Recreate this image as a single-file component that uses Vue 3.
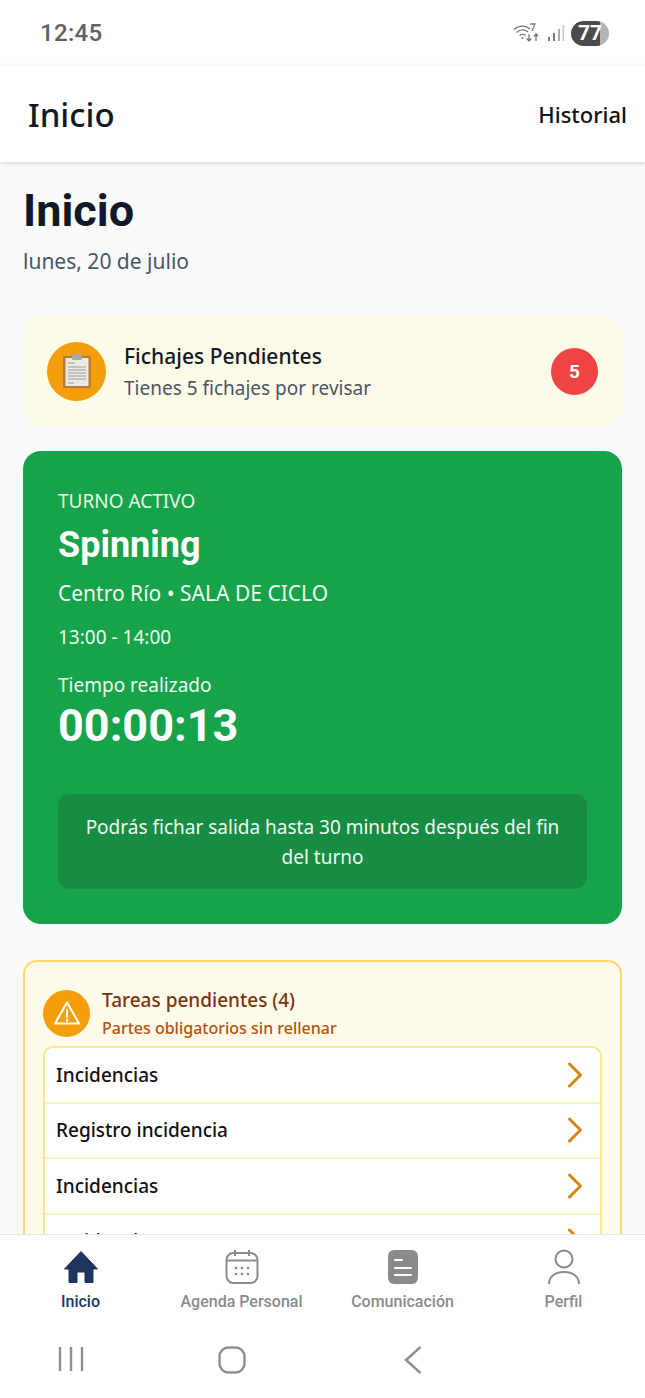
<script setup>
const tasks = ['Incidencias', 'Registro incidencia', 'Incidencias', 'Incidencias']
</script>

<template>
  <div class="phone">
    <div class="status">
      <span class="clock">12:45</span>
      <div class="status-icons">
        <svg class="wifi" width="32" height="22" viewBox="0 0 32 22" fill="none" stroke="#77797c" stroke-width="1.3">
          <path d="M1 7.5C6 3 12.5 3 17 7" />
          <path d="M3.5 10.5C7.5 7.2 11.5 7.2 15 10" />
          <path d="M6.5 13.5C8.5 12 10.5 12 12.5 13.2" />
          <circle cx="9.5" cy="16" r="1" fill="#77797c" stroke="none" />
          <path d="M17 2h5l-3 7" />
          <path d="M16 12v7M13.8 16.5l2.2 2.6 2.2-2.6M23 19v-7M20.8 14.4l2.2-2.6 2.2 2.6" />
        </svg>
        <svg class="signal" width="18" height="20" viewBox="0 0 18 20">
          <rect x="1" y="14" width="2" height="4" fill="#77797c" />
          <rect x="6" y="10" width="2" height="8" fill="#77797c" />
          <rect x="11" y="6" width="2" height="12" fill="#a9abad" />
          <rect x="15.5" y="2" width="1.6" height="16" fill="#c6c8c9" />
        </svg>
        <div class="battery"><span>77</span></div>
      </div>
    </div>

    <header class="appbar">
      <h1>Inicio</h1>
      <span class="historial">Historial</span>
    </header>

    <main class="content">
      <h2 class="page-title">Inicio</h2>
      <p class="date">lunes, 20 de julio</p>

      <section class="pending">
        <div class="pending-icon">
          <svg width="30" height="36" viewBox="0 0 30 36">
            <rect x="1" y="3" width="28" height="32" rx="1.5" fill="#b87a3a" />
            <rect x="3.5" y="5" width="23" height="28" fill="#eceae6" />
            <rect x="10" y="1" width="10" height="6" rx="1.5" fill="#a8a8a8" />
            <path d="M6 10h7M6 14h18M6 17h18M6 20h18M6 23h18M6 26h18M6 30h6" stroke="#9a9a9a" stroke-width="1.2" />
          </svg>
        </div>
        <div class="pending-text">
          <div class="pending-title">Fichajes Pendientes</div>
          <div class="pending-sub">Tienes 5 fichajes por revisar</div>
        </div>
        <div class="count">5</div>
      </section>

      <section class="shift">
        <div class="shift-label">TURNO ACTIVO</div>
        <div class="shift-name">Spinning</div>
        <div class="shift-place">Centro Río • SALA DE CICLO</div>
        <div class="shift-hours">13:00 - 14:00</div>
        <div class="shift-elapsed">Tiempo realizado</div>
        <div class="shift-timer">00:00:13</div>
        <div class="shift-note">Podrás fichar salida hasta 30 minutos después del fin del turno</div>
      </section>

      <section class="tasks">
        <div class="tasks-head">
          <div class="tasks-icon">
            <svg width="28" height="26" viewBox="0 0 28 26" fill="none" stroke="#fff" stroke-width="2" stroke-linejoin="round">
              <path d="M14 2.5 26 23.5H2Z" />
              <path d="M14 10v7M14 19.5v1.5" stroke-linecap="round" />
            </svg>
          </div>
          <div>
            <div class="tasks-title">Tareas pendientes (4)</div>
            <div class="tasks-sub">Partes obligatorios sin rellenar</div>
          </div>
        </div>
        <div class="task-list">
          <div v-for="(t, i) in tasks" :key="i" class="task">
            <span>{{ t }}</span>
            <svg width="16" height="26" viewBox="0 0 16 26" fill="none" stroke="#d98512" stroke-width="3" stroke-linecap="round" stroke-linejoin="round">
              <path d="M2.5 2 13.5 13 2.5 24" />
            </svg>
          </div>
        </div>
      </section>
    </main>

    <nav class="tabs">
      <div class="tab active">
        <svg width="34" height="34" viewBox="0 0 34 34">
          <path d="M17 1.5 33.5 19H29V32.5H21V23a1 1 0 0 0-1-1h-6a1 1 0 0 0-1 1v9.500H5V19H.5Z" fill="#1e3560" stroke="#1e3560" stroke-linejoin="round" />
        </svg>
        <span>Inicio</span>
      </div>
      <div class="tab">
        <svg width="34" height="36" viewBox="0 0 34 36" fill="none" stroke="#8b8b8b" stroke-width="2">
          <rect x="1.500" y="4" width="31" height="30" rx="7" />
          <path d="M1.500 11.500h31M10 1v6M24 1v6" />
          <g fill="#8b8b8b" stroke="none">
            <circle cx="11" cy="19" r="1.300" /><circle cx="17" cy="19" r="1.300" /><circle cx="23" cy="19" r="1.300" />
            <circle cx="11" cy="25" r="1.300" /><circle cx="17" cy="25" r="1.300" /><circle cx="23" cy="25" r="1.300" />
          </g>
        </svg>
        <span>Agenda Personal</span>
      </div>
      <div class="tab">
        <svg width="30" height="34" viewBox="0 0 30 34">
          <rect width="30" height="34" rx="6" fill="#8b8b8b" />
          <path d="M7 10h7M7 18h16M7 25h16" stroke="#fff" stroke-width="2.200" stroke-linecap="round" />
        </svg>
        <span>Comunicación</span>
      </div>
      <div class="tab">
        <svg width="34" height="36" viewBox="0 0 34 36" fill="none" stroke="#8b8b8b" stroke-width="2">
          <circle cx="17" cy="10" r="8.500" />
          <path d="M2 35C2 27 9 23 17 23S32 27 32 35" />
        </svg>
        <span>Perfil</span>
      </div>
    </nav>

    <div class="sysnav">
      <svg width="26" height="26" viewBox="0 0 26 26" stroke="#8f8f8f" stroke-width="2.400">
        <path d="M2 1v24M13 1v24M24 1v24" />
      </svg>
      <svg width="28" height="28" viewBox="0 0 28 28" fill="none" stroke="#8f8f8f" stroke-width="2.400">
        <rect x="1.500" y="1.500" width="25" height="25" rx="9" />
      </svg>
      <svg width="18" height="28" viewBox="0 0 18 28" fill="none" stroke="#8f8f8f" stroke-width="2.400">
        <path d="M16.500 1 2 14 16.500 27" />
      </svg>
    </div>
  </div>
</template>

<style>
html, body { margin: 0; background: #fff; }
</style>

<style scoped>
.phone {
  width: 645px;
  height: 1398px;
  display: flex;
  flex-direction: column;
  overflow: hidden;
  background: #fff;
  font-family: "Noto Sans", sans-serif;
  color: #111827;
}
.status {
  height: 66px;
  flex: none;
  display: flex;
  align-items: center;
  justify-content: space-between;
  padding: 0 36px 0 40px;
}
.clock { font: 500 24px "Roboto", sans-serif; color: #5f6164; letter-spacing: 0.3px; }
.status-icons { display: flex; align-items: center; gap: 2px; }
.wifi { margin-right: 0; }
.battery {
  width: 38px;
  height: 25px;
  border-radius: 13px;
  margin-left: 4px;
  background: linear-gradient(90deg, #4a4b4d 0 76%, #b4b5b7 76% 100%);
  display: flex;
  align-items: center;
  justify-content: center;
  font: 700 21px "Roboto", sans-serif;
  color: #fff;
}
.appbar {
  height: 96px;
  flex: none;
  display: flex;
  align-items: center;
  justify-content: space-between;
  padding: 0 18px 0 28px;
  box-sizing: border-box;
  box-shadow: 0 1px 5px rgba(0, 0, 0, 0.16);
  position: relative;
  z-index: 1;
  background: #fff;
}
.appbar h1 { margin: 0; font: 500 33px "Noto Sans", sans-serif; color: #111827; }
.historial { font-size: 22px; font-weight: 500; color: #111; }
.content {
  flex: 1;
  min-height: 0;
  overflow: hidden;
  background: #f9fafb;
  padding: 20px 23px 0;
}
.page-title { margin: 0; font: 700 45px/58px "Roboto", sans-serif; color: #111827; }
.date { margin: 6px 0 0; font-size: 21px; line-height: 30px; color: #4b5563; }
.pending {
  margin-top: 39px;
  height: 112px;
  box-sizing: border-box;
  border-radius: 20px;
  background: #fefbe8;
  display: flex;
  align-items: center;
  padding: 0 24px;
}
.pending-icon {
  width: 59px;
  height: 59px;
  border-radius: 50%;
  background: #f59e0b;
  display: flex;
  align-items: center;
  justify-content: center;
  flex: none;
}
.pending-text { flex: 1; margin-left: 18px; }
.pending-title { font-size: 21px; font-weight: 500; line-height: 30px; color: #111827; }
.pending-sub { font-size: 19px; line-height: 28px; margin-top: 3px; color: #4b5563; }
.count {
  width: 47px;
  height: 47px;
  border-radius: 50%;
  background: #ef4444;
  color: #fff;
  display: flex;
  align-items: center;
  justify-content: center;
  font: 700 19px "Roboto", sans-serif;
}
.shift {
  margin-top: 24px;
  height: 473px;
  box-sizing: border-box;
  border-radius: 18px;
  background: #16a34a;
  color: #fff;
  padding: 36px 35px 0;
}
.shift-label { font-size: 19px; line-height: 28px; color: #e9f8ee; }
.shift-name { font: 700 36px/46px "Roboto", sans-serif; margin-top: 7px; }
.shift-place { font-size: 21px; line-height: 30px; margin-top: 10px; color: #effaf3; }
.shift-hours { font-size: 19px; line-height: 28px; margin-top: 15px; color: #effaf3; }
.shift-elapsed { font-size: 19px; line-height: 28px; margin-top: 20px; color: #effaf3; }
.shift-timer { font: 700 45px/54px "Roboto", sans-serif; margin-top: 0; }
.shift-note {
  margin-top: 41px;
  height: 95px;
  box-sizing: border-box;
  border-radius: 12px;
  background: #178c43;
  padding: 0 14px;
  display: flex;
  align-items: center;
  text-align: center;
  font-size: 19px;
  line-height: 30px;
  color: #effaf3;
}
.tasks {
  margin-top: 36px;
  box-sizing: border-box;
  border: 2px solid #fcd968;
  border-radius: 14px;
  background: #fffbeb;
  padding: 18px 18px 16px;
}
.tasks-head { display: flex; align-items: center; gap: 12px; height: 66px; margin-bottom: 0; }
.tasks-icon {
  width: 47px;
  height: 47px;
  border-radius: 50%;
  background: #f59e0b;
  display: flex;
  align-items: center;
  justify-content: center;
  flex: none;
}
.tasks-title { font-size: 19px; font-weight: 500; line-height: 27px; color: #78350f; }
.tasks-sub { font-size: 16px; font-weight: 500; line-height: 24px; color: #b45309; margin-top: 2px; }
.task-list {
  border: 2px solid #fde68a;
  border-radius: 10px;
  background: #fff;
  overflow: hidden;
}
.task {
  height: 53.500px;
  display: flex;
  align-items: center;
  justify-content: space-between;
  padding: 0 17px 0 11px;
  border-bottom: 2px solid #fef3c7;
  font-size: 19px;
  font-weight: 500;
  color: #111;
}
.tabs {
  flex: none;
  height: 92px;
  box-sizing: border-box;
  border-top: 1px solid #e3e5e8;
  background: #fff;
  display: grid;
  grid-template-columns: repeat(4, 161px);
  padding-left: 0;
  position: relative;
}
.tab {
  display: flex;
  flex-direction: column;
  align-items: center;
  justify-content: flex-start;
  padding-top: 14px;
  gap: 6px;
  font: 500 16px/22px "Roboto", sans-serif;
  color: #8b8b8b;
}
.tab svg { height: 36px; }
.tab.active { color: #1e3560; }
.sysnav {
  flex: none;
  height: 72px;
  background: #fff;
  display: grid;
  grid-template-columns: 141px 181px 181px;
  justify-items: center;
  align-items: start;
  padding-top: 20px;
  box-sizing: border-box;
}
</style>
